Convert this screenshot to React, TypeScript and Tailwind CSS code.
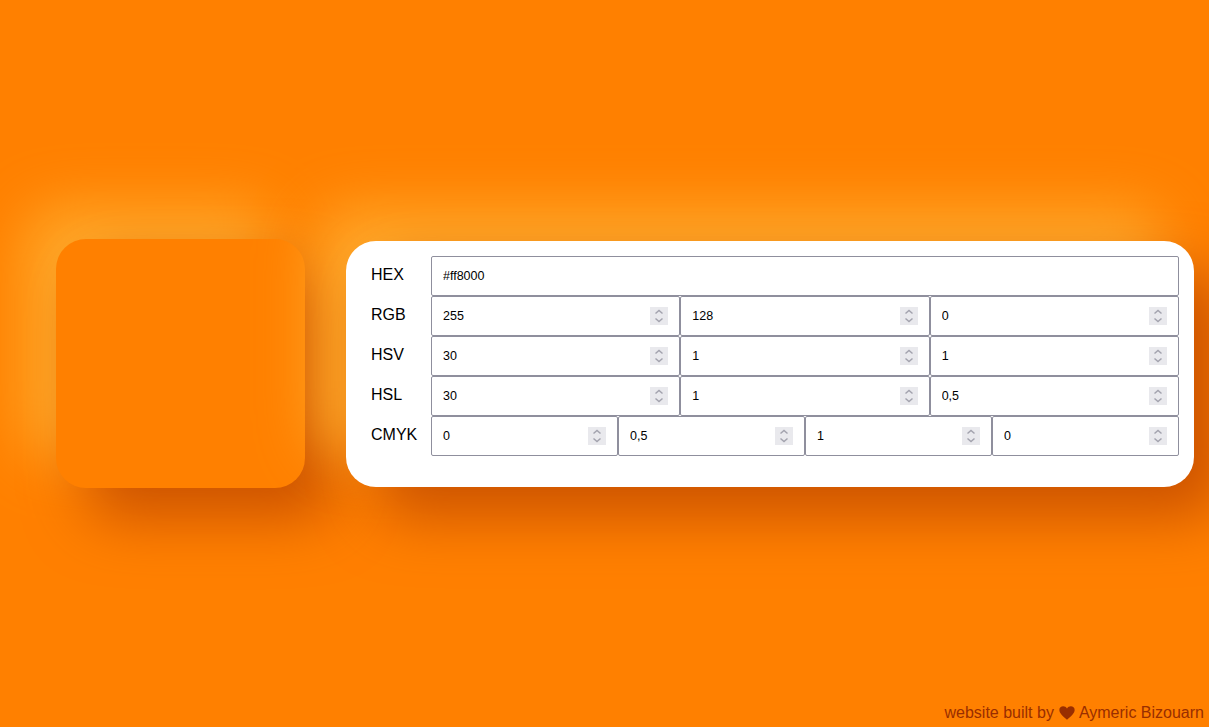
import React from 'react'

const font = 'font-["Liberation_Sans",Arial,sans-serif]'

const inputClass =
  'h-10 w-full rounded-[2px] border border-[#8f8f9d] bg-white pl-[11px] pr-[11px] text-[12.5px] text-black outline-none'

const rows = [
  { label: 'RGB', values: ['255', '128', '0'] },
  { label: 'HSV', values: ['30', '1', '1'] },
  { label: 'HSL', values: ['30', '1', '0,5'] },
  { label: 'CMYK', values: ['0', '0,5', '1', '0'] },
]

const Row = ({ label, children }: { label: string; children: React.ReactNode }) => (
  <div className="flex h-10 items-center">
    <div className="w-[60px] pb-[1px] text-[16px] text-black">{label}</div>
    <div className="flex flex-1">{children}</div>
  </div>
)

const NumberField = ({ value }: { value: string }) => (
  <div className="relative min-w-0 flex-1">
    <input type="text" inputMode="decimal" defaultValue={value} className={inputClass} />
    <div className="absolute right-[12px] top-[11px] flex h-[18px] w-[18px] items-center justify-center bg-[#e9e9ed]">
      <svg viewBox="0 0 18 18" className="h-[18px] w-[18px] fill-none stroke-[#a3a3ae] stroke-[1.5]">
        <path d="M5.5 6.5 L9 3.5 L12.5 6.5" />
        <path d="M5.5 11.5 L9 14.5 L12.5 11.5" />
      </svg>
    </div>
  </div>
)

export default function App() {
  return (
    <div className={`relative flex h-screen items-center overflow-hidden bg-[#ff8000] pl-[56px] pr-[15px] ${font}`}>
      {/* aperçu de la couleur */}
      <div className="h-[249px] w-[249px] shrink-0 rounded-[30px] bg-[#ff8000] shadow-[30px_30px_60px_#cc5200,-30px_-30px_60px_#ffad2d]" />

      {/* convertisseur */}
      <div className="ml-[41px] flex-1 rounded-[30px] bg-white pb-[31px] pl-[25px] pr-[15px] pt-[15px] shadow-[30px_30px_60px_#cc5200,-30px_-30px_60px_#ffad2d]">
        <Row label="HEX">
          <input type="text" defaultValue="#ff8000" className={inputClass} />
        </Row>
        {rows.map((row) => (
          <Row key={row.label} label={row.label}>
            {row.values.map((value, i) => (
              <NumberField key={i} value={value} />
            ))}
          </Row>
        ))}
      </div>

      <div className="absolute bottom-[5px] right-[5px] flex items-center text-[16px] leading-[18px] text-[#992e00]">
        website built by
        <svg viewBox="0 0 24 24" className="ml-[5px] mr-[4px] h-[16px] w-[16px] fill-[#992e00]">
          <path d="M12 22 C5 16 0.5 12 0.5 7.5 C0.5 4 3.2 2 6.2 2 C8.6 2 10.8 3.2 12 5.4 C13.2 3.2 15.4 2 17.8 2 C20.8 2 23.5 4 23.5 7.5 C23.5 12 19 16 12 22 Z" />
        </svg>
        Aymeric Bizouarn
      </div>
    </div>
  )
}
